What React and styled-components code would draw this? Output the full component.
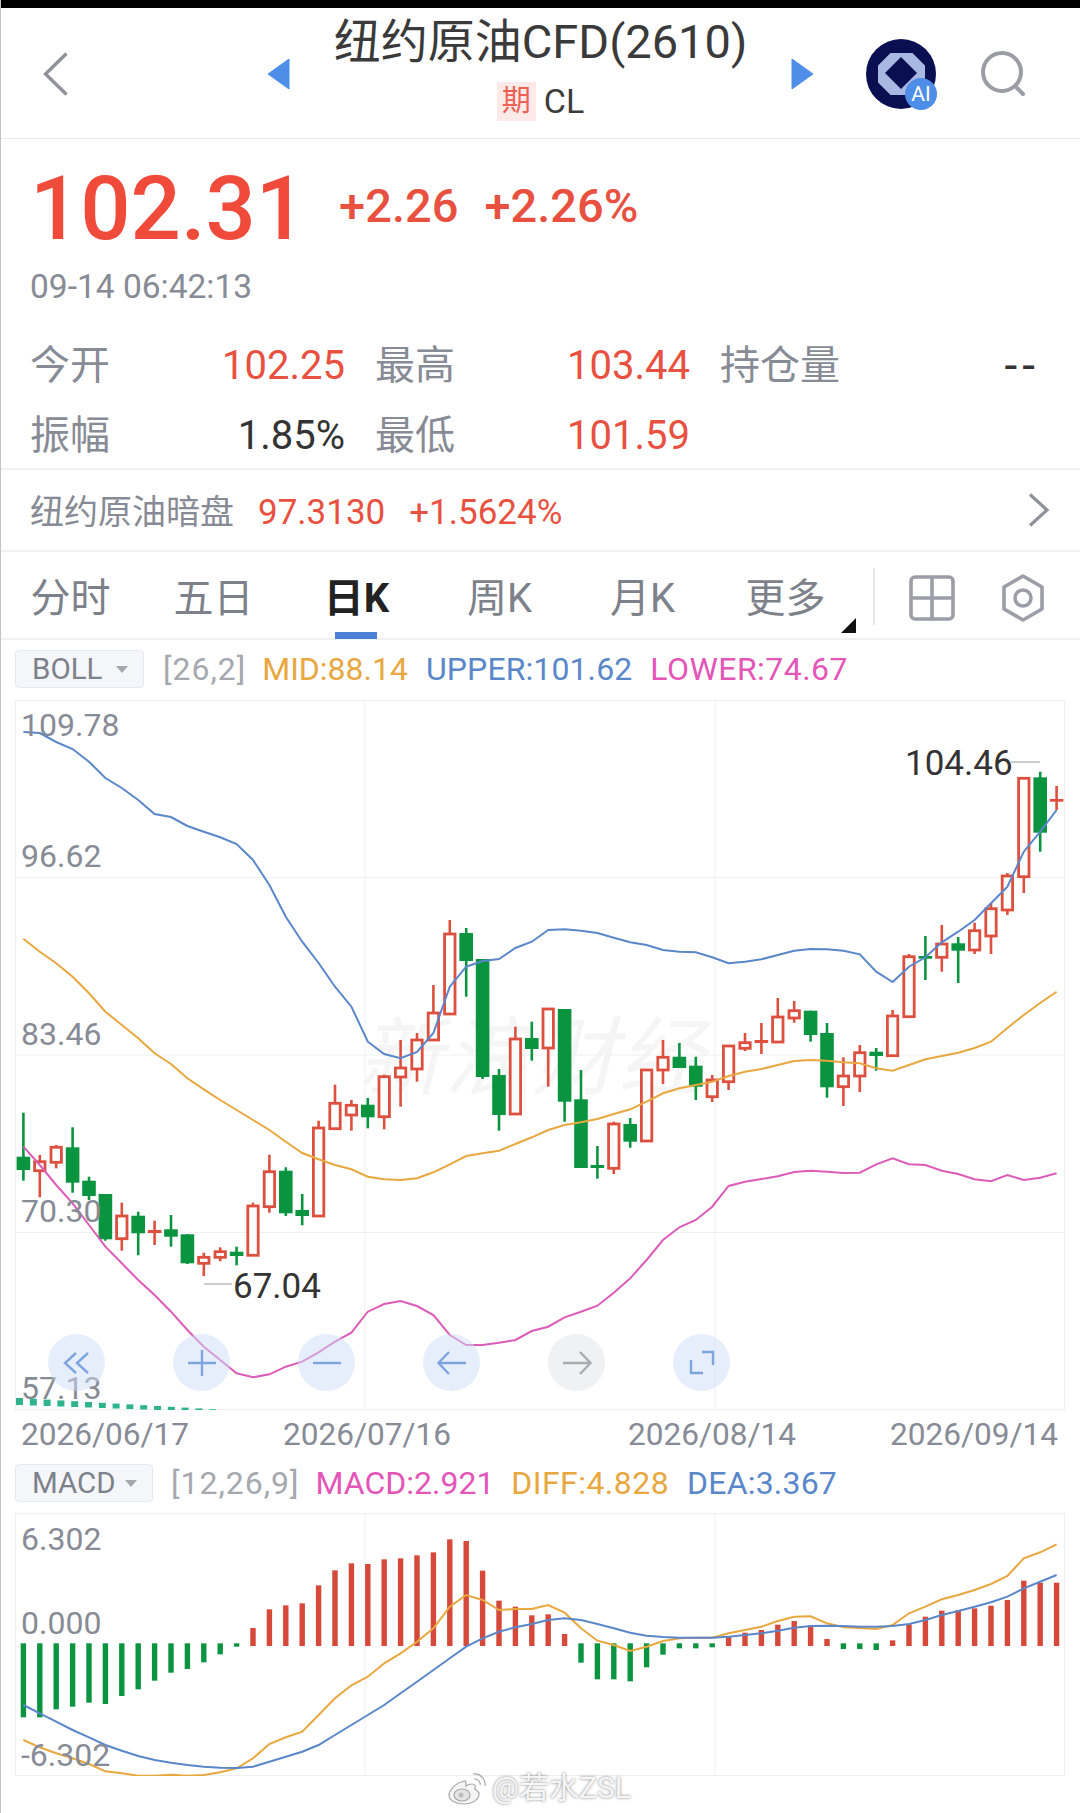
import * as React from "react";
import styled, { createGlobalStyle } from "styled-components";

const FONT = 'Roboto, "Noto Sans CJK SC", sans-serif';
const RED = "#e8503f";
const GREEN = "#0a9440";
const GREY = "#878b95";
const GOLD = "#e8a73f";
const BLUE = "#5a87c9";
const PINK = "#dc5cb8";

const GlobalStyle = createGlobalStyle`
  html, body {
    margin: 0;
    width: 1080px;
    height: 1813px;
    overflow: hidden;
    background: #fff;
    font-family: ${FONT};
  }
`;

const Page = styled.div`
  position: relative;
  width: 1080px;
  height: 1813px;
  box-sizing: border-box;
  border-left: 1px solid #c4c4c4;
  background: #fff;
  overflow: hidden;
`;

const StatusStrip = styled.div`
  height: 8px;
  margin-left: -1px;
  background: #000;
`;

/* header */
const Header = styled.header`
  display: flex;
  align-items: center;
  height: 131px;
  padding-top: 2px;
  box-sizing: border-box;
  border-bottom: 1px solid #e8e8e8;
`;

const BackSlot = styled.div`
  width: 266px;
  padding-left: 42px;
  box-sizing: border-box;
  display: flex;
`;

const TitleBlock = styled.div`
  align-self: flex-start;
  width: 499px;
  padding-top: 8px;
  box-sizing: border-box;
  display: flex;
  flex-direction: column;
  align-items: center;
`;

const Title = styled.div`
  height: 48px;
  line-height: 48px;
  font-size: 47px;
  color: #3a3a3a;
  white-space: nowrap;
`;

const SubTitle = styled.div`
  display: flex;
  align-items: center;
  gap: 8px;
  margin-top: 16px;
`;

const FutureBadge = styled.span`
  width: 39px;
  height: 39px;
  line-height: 39px;
  text-align: center;
  font-size: 29px;
  color: #ec6154;
  background: #fdeae8;
`;

const Symbol = styled.span`
  font-size: 34px;
  line-height: 39px;
  color: #3c3c3c;
`;

const HeaderActions = styled.div`
  display: flex;
  align-items: center;
  margin-left: 52px;
  gap: 45px;
`;

const AiBadge = styled.div`
  position: relative;
  width: 70px;
  height: 70px;
`;

const AiMark = styled.span`
  position: absolute;
  right: -1px;
  bottom: -1px;
  width: 32px;
  height: 32px;
  border-radius: 50%;
  background: #4f8ee8;
  color: #fff;
  font-size: 21px;
  line-height: 32px;
  text-align: center;
`;

/* quote */
const Quote = styled.section`
  height: 191px;
  padding-left: 29px;
  box-sizing: border-box;
`;

const PriceRow = styled.div`
  display: flex;
  align-items: center;
  height: 137px;
  padding-top: 3px;
  box-sizing: border-box;
`;

const LastPrice = styled.div`
  font-size: 88.5px;
  line-height: 90px;
  font-weight: 500;
  color: #f04a3a;
`;

const Change = styled.div`
  font-size: 47px;
  line-height: 48px;
  font-weight: 500;
  color: ${RED};
  margin-left: ${(p) => p.$gap}px;
  margin-bottom: 6px;
`;

const QuoteTime = styled.div`
  font-size: 33.5px;
  line-height: 22px;
  color: ${GREY};
`;

const Stats = styled.div`
  display: grid;
  grid-template-columns: 315px 315px 315px;
  column-gap: 30px;
  grid-auto-rows: 70px;
  padding-left: 29px;
  border-bottom: 2px solid #f0f0f0;
  height: 140px;
  box-sizing: border-box;
`;

const Stat = styled.div`
  display: flex;
  align-items: center;
  justify-content: space-between;
`;

const StatLabel = styled.span`
  font-size: 40px;
  line-height: 48px;
  color: ${GREY};
  margin-top: 2px;
`;

const StatValue = styled.span`
  font-size: 40px;
  line-height: 48px;
  margin-top: 2px;
  color: ${(p) => p.$color};
`;

const EmptyValue = styled.span`
  font-size: 46px;
  line-height: 48px;
  letter-spacing: 5px;
  margin-right: -5px;
  color: #333;
`;

const DarkPool = styled.div`
  display: flex;
  align-items: center;
  height: 82px;
  box-sizing: border-box;
  padding-left: 29px;
  border-bottom: 2px solid #f0f0f0;
`;

const DarkLabel = styled.span`
  font-size: 34px;
  line-height: 44px;
  color: ${GREY};
  margin: 3px 24px 0 0;
`;

const DarkValue = styled.span`
  font-size: 35px;
  color: ${RED};
  margin: 4px 24px 0 0;
`;

const RowChevron = styled.svg`
  margin-left: auto;
  margin-right: 30px;
`;

/* tabs */
const TabBar = styled.nav`
  display: flex;
  height: 88px;
  border-bottom: 2px solid #f0f0f0;
  box-sizing: border-box;
`;

const TabList = styled.div`
  display: flex;
  margin: 0 2px 0 -2px;
`;

const Tab = styled.div`
  position: relative;
  width: 143px;
  text-align: center;
  line-height: 93px;
  font-size: 40px;
  font-weight: ${(p) => (p.$active ? 700 : 400)};
  color: ${(p) => (p.$active ? "#222" : "#7d818a")};

  &::after {
    content: "";
    display: ${(p) => (p.$active ? "block" : "none")};
    position: absolute;
    left: 50%;
    bottom: -1px;
    width: 42px;
    height: 7px;
    margin-left: -22px;
    background: #4a80d8;
  }
`;

const MoreFlag = styled.span`
  position: absolute;
  right: 1px;
  bottom: 5px;
  width: 0;
  height: 0;
  border-left: 15px solid transparent;
  border-bottom: 15px solid #111;
`;

const TabDivider = styled.div`
  width: 2px;
  height: 57px;
  margin: 16px 0 0 14px;
  background: #e8e8ea;
`;

const TabIcons = styled.div`
  display: flex;
  align-items: center;
  gap: 47px;
  margin: 6px 0 0 34px;
`;

/* chart legends */
const Legend = styled.div`
  display: flex;
  align-items: flex-start;
  height: ${(p) => p.$height}px;
  padding: ${(p) => p.$top}px 0 0 14px;
  box-sizing: border-box;
  font-size: 32px;
  line-height: 38px;
`;

const IndicatorChip = styled.div`
  display: flex;
  align-items: center;
  justify-content: space-between;
  width: ${(p) => p.$width}px;
  height: 38px;
  padding: 0 15px 0 16px;
  box-sizing: border-box;
  border: 1px solid #e5e8ee;
  border-radius: 4px;
  background: #f4f6fa;
  color: #7d818a;
  font-size: 29.5px;

  &::after {
    content: "";
    border-left: 6px solid transparent;
    border-right: 6px solid transparent;
    border-top: 7px solid #a5a8ae;
  }
`;

const LegendItem = styled.span`
  color: ${(p) => p.$color};
  margin-left: ${(p) => p.$gap}px;
  letter-spacing: ${(p) => p.$spread || 0}px;
  white-space: nowrap;
`;

/* chart frames */
const ChartBox = styled.div`
  position: relative;
  width: 1050px;
  height: ${(p) => p.$height}px;
  margin-left: 14px;
`;

const ChartSvg = styled.svg`
  position: relative;
  display: block;
  z-index: 1;
`;

const Watermark = styled.span`
  position: absolute;
  left: 350px;
  top: 314px;
  font-size: 85px;
  line-height: 90px;
  letter-spacing: 2px;
  color: #f5f5f5;
  transform: skewX(-14deg);
  white-space: nowrap;
`;

const AxisLabel = styled.span`
  position: absolute;
  z-index: 2;
  left: ${(p) => p.$x}px;
  top: ${(p) => p.$y}px;
  font-size: 32px;
  line-height: 31px;
  color: ${GREY};
`;

const Extreme = styled.span`
  position: absolute;
  z-index: 2;
  left: ${(p) => p.$x}px;
  top: ${(p) => p.$y}px;
  font-size: 35px;
  line-height: 34px;
  color: #333;
`;

const ControlBar = styled.div`
  position: absolute;
  z-index: 3;
  left: 33px;
  top: 634px;
  display: flex;
  gap: 68px;
`;

const ControlButton = styled.div`
  width: 57px;
  height: 57px;
  border-radius: 50%;
  display: flex;
  align-items: center;
  justify-content: center;
  background: ${(p) => (p.$off ? "rgba(226, 228, 232, 0.5)" : "rgba(205, 222, 247, 0.5)")};
  color: ${(p) => (p.$off ? "#a8abb2" : "#7ea4e0")};
`;

const DateRow = styled.div`
  display: grid;
  grid-template-columns: 262px 345px 262px auto;
  height: 50px;
  padding: 11px 0 0 20px;
  box-sizing: border-box;
  font-size: 31.6px;
  line-height: 28px;
  color: ${GREY};
`;

const Credit = styled.div`
  position: absolute;
  z-index: 4;
  left: 447px;
  top: 1770px;
  display: flex;
  align-items: center;
  gap: 4px;
  font-size: 30px;
  line-height: 36px;
  color: #f5f5f5;
  text-shadow: 0 0 3px rgba(0, 0, 0, 0.5);
`;

// candle rows: up?, wick top, body top, body bottom, wick bottom (page px)
const CANDLES = [
  [0, 1112.7, 1156.7, 1170, 1180.7], [1, 1155, 1161.7, 1170.7, 1197.3], [1, 1145, 1147.3, 1162.3, 1168.3],
  [0, 1127.3, 1147.3, 1182.7, 1192.7], [0, 1176.7, 1180.7, 1196, 1200], [0, 1194, 1194, 1239.3, 1240.7],
  [1, 1202.7, 1216, 1238.7, 1250.7], [0, 1211.7, 1215.7, 1233.3, 1255.3], [1, 1220.7, 1230, 1233, 1245],
  [0, 1215, 1229.3, 1236.7, 1246.7], [0, 1234, 1234.3, 1263.3, 1264], [1, 1252.7, 1257.3, 1263.3, 1276],
  [1, 1247.3, 1251.7, 1257.3, 1261.3], [0, 1246.7, 1251.7, 1256, 1265.3], [1, 1202.7, 1206, 1255.3, 1256],
  [1, 1154.7, 1171.7, 1206.7, 1212.7], [0, 1167.3, 1170.7, 1213.3, 1216], [0, 1194, 1210, 1216, 1225.3],
  [1, 1120.7, 1128, 1216, 1216.7], [1, 1084.7, 1103.3, 1128.7, 1130], [1, 1100, 1105.3, 1115, 1130.7],
  [0, 1098, 1104.7, 1117.3, 1128.3], [1, 1074.7, 1076.7, 1116.7, 1129.3], [1, 1040, 1068, 1077, 1106.7],
  [1, 1033, 1040, 1069, 1081.7], [1, 985, 1013, 1040, 1040], [1, 920, 934, 1014, 1014],
  [0, 928, 933, 961, 996.7], [0, 959, 959, 1077, 1079], [0, 1069, 1075, 1115, 1130.7],
  [1, 1026.7, 1039, 1114, 1114], [0, 1021.7, 1038, 1049, 1060.7], [1, 1009, 1009, 1048, 1086.7],
  [0, 1009, 1009, 1101.7, 1121.7], [0, 1070, 1099.3, 1168, 1168], [0, 1146, 1165, 1168, 1178.7],
  [1, 1121.7, 1124, 1168.3, 1174], [0, 1118, 1124, 1141.7, 1147.7], [1, 1070, 1070, 1141, 1141],
  [1, 1040, 1057.3, 1070, 1084], [0, 1043, 1056.7, 1068, 1068], [0, 1056.7, 1065.7, 1086.7, 1100],
  [1, 1075, 1080, 1096.7, 1102], [1, 1046, 1046, 1081.7, 1090], [1, 1033, 1042.7, 1048.3, 1051],
  [1, 1023, 1040, 1043, 1054], [1, 998, 1017, 1042, 1043], [1, 1001, 1010.7, 1018, 1022.7],
  [0, 1010.7, 1010.7, 1035, 1041.7], [0, 1023, 1033, 1087.3, 1097.7], [1, 1057.3, 1076, 1086.7, 1106],
  [1, 1045, 1052.7, 1076, 1092], [0, 1048, 1051.7, 1056, 1070.7], [1, 1010, 1016, 1055.7, 1056],
  [1, 954, 956.7, 1016.7, 1017], [0, 936, 956, 958.7, 980], [1, 925, 944, 957.3, 971.7],
  [0, 937, 943.3, 950.7, 983], [1, 922.7, 930.7, 950, 954], [1, 903, 908.7, 936, 954],
  [1, 873, 876, 910, 915], [1, 778.3, 778.3, 876.7, 893], [0, 771.7, 777.3, 832.7, 851.7],
  [1, 786, 799, 801.7, 810],
];

const UPPER = [
  732, 733, 742, 749, 761.7, 778, 788, 800, 814, 817, 826, 831.7, 837.3, 844, 860, 885, 916.7, 941.7, 963, 986.7,
  1006.7, 1041.7, 1054, 1058.3, 1052, 1033, 986.7, 966.7, 961, 959, 948, 941.7, 930, 929.3, 930.7, 933, 937.7,
  942.3, 945, 950, 951.7, 952.3, 957.3, 963.3, 961.7, 959.3, 955, 950.7, 949, 949.3, 950.7, 954.3, 971.7, 982,
  966.7, 957.3, 942.3, 931.7, 920, 903.3, 886.7, 851.7, 831.7, 810,
];

const MID = [
  938.7, 951.7, 963.3, 976.7, 993.3, 1011.7, 1025, 1038.3, 1053.3, 1064, 1078.3, 1089.3, 1100, 1110, 1120, 1130,
  1141.7, 1153, 1159.3, 1165, 1169.3, 1176.7, 1179.3, 1180, 1178.3, 1172.3, 1164.3, 1156, 1153.3, 1150.7, 1144,
  1137.3, 1130, 1125, 1122.3, 1119, 1114, 1109.3, 1101.7, 1093.3, 1088.3, 1085, 1081.7, 1076, 1071.7, 1069, 1065,
  1061, 1060, 1060.7, 1062.3, 1063.3, 1068.3, 1070.7, 1065, 1059.3, 1056, 1052.7, 1048, 1041.7, 1028, 1015, 1003,
  991.7,
];

const LOWER = [
  1146.7, 1165, 1185, 1203.3, 1225, 1246.7, 1263.3, 1280, 1295, 1311.7, 1330, 1346.7, 1360, 1373.3, 1377.3,
  1374.3, 1366.7, 1361.7, 1352.3, 1341.7, 1332.7, 1311.7, 1304, 1301, 1306, 1315, 1335, 1345, 1345, 1342.7, 1340,
  1331, 1326.7, 1317.3, 1311.7, 1305.7, 1292.7, 1278.3, 1260, 1240, 1227.3, 1220, 1206.7, 1186, 1181.7, 1179,
  1176.3, 1172, 1170.7, 1171.7, 1173, 1172.7, 1164.3, 1158.3, 1164.3, 1165, 1170.7, 1174, 1179.3, 1181.3, 1175,
  1180, 1177.7, 1173.3,
];

// macd rows are read off a 3x crop that starts at y=1450
const HIST = [
  802, 802, 778, 770, 758, 762, 738, 718, 692, 668, 657, 637, 613, 590, 534, 478, 466, 460, 406, 361, 340, 342, 328,
  325, 316, 307, 268, 273, 362, 452, 470, 496, 493, 552, 638, 688, 688, 694, 652, 614, 595, 595, 592, 560, 548, 540,
  524, 513, 526, 567, 597, 597, 600, 571, 523, 500, 482, 480, 475, 467, 450, 392, 398, 398,
];

const DIFF = [
  870, 892, 910, 925, 942, 964, 970, 977, 977, 974, 977, 975, 967, 955, 925, 882, 862, 845, 795, 745, 706, 680, 640,
  610, 575, 535, 470, 435, 450, 480, 477, 477, 465, 488, 535, 572, 585, 603, 590, 573, 565, 563, 563, 550, 540, 530,
  513, 500, 499, 520, 532, 534, 537, 525, 490, 470, 448, 435, 420, 402, 378, 325, 307, 283,
];

const DEA = [
  765, 790, 815, 840, 862, 885, 902, 918, 930, 938, 945, 950, 953, 954, 950, 935, 920, 905, 885, 855, 825, 795, 765,
  730, 695, 660, 625, 590, 565, 545, 532, 522, 510, 505, 510, 522, 535, 548, 557, 561, 563, 563, 563, 560, 555, 550,
  542, 533, 528, 527, 528, 530, 530, 528, 522, 510, 495, 483, 470, 457, 440, 415, 395, 375,
];

const candleX = (i) => 23.4 + i * 16.4;
const macdY = (v) => 1450 + v / 3;
const toPoints = (values, mapY = (v) => v) =>
  values.map((v, i) => `${candleX(i).toFixed(1)},${mapY(v).toFixed(1)}`).join(" ");

function Candle({ index, up, wickTop, bodyTop, bodyBottom, wickBottom }) {
  const x = candleX(index);
  const color = up ? "#dd4f3e" : GREEN;
  const thin = bodyBottom - bodyTop < 5;
  return (
    <g>
      <line x1={x} x2={x} y1={wickTop} y2={wickBottom} stroke={color} strokeWidth="2.6" />
      {up && !thin ? (
        <rect x={x - 5.2} y={bodyTop} width="10.4" height={bodyBottom - bodyTop} fill="#fff" stroke={color} strokeWidth="2.8" />
      ) : (
        <rect x={x - 6.8} y={bodyTop} width="13.6" height={bodyBottom - bodyTop} fill={color} />
      )}
    </g>
  );
}

function GridLines({ top, height, rows }) {
  return (
    <g stroke="#eeeff1" strokeWidth="1" fill="none">
      <rect x="15.5" y={top + 0.5} width="1049" height={height - 1} />
      <line x1="365" x2="365" y1={top} y2={top + height} />
      <line x1="715" x2="715" y1={top} y2={top + height} />
      {rows.map((y) => (
        <line key={y} x1="15" x2="1065" y1={y} y2={y} />
      ))}
    </g>
  );
}

function KLineChart() {
  return (
    <ChartSvg width="1050" height="710" viewBox="15 700 1050 710">
      <GridLines top={700} height={710} rows={[877.5, 1055, 1232.5]} />
      {Array.from({ length: 15 }, (_, i) => (
        <rect key={i} x={16 + i * 13.8} y={1398 + i * 0.8} width="7" height={7 - i * 0.3} fill="#2fb38c" />
      ))}
      {CANDLES.map(([up, wickTop, bodyTop, bodyBottom, wickBottom], i) => (
        <Candle key={i} index={i} up={up === 1} wickTop={wickTop} bodyTop={bodyTop} bodyBottom={bodyBottom} wickBottom={wickBottom} />
      ))}
      <polyline points={toPoints(UPPER)} fill="none" stroke={BLUE} strokeWidth="2" />
      <polyline points={toPoints(MID)} fill="none" stroke={GOLD} strokeWidth="2" />
      <polyline points={toPoints(LOWER)} fill="none" stroke={PINK} strokeWidth="2" />
      <line x1="1011" x2="1040" y1="762" y2="762" stroke="#999" strokeWidth="1" />
      <line x1="204" x2="232" y1="1284" y2="1284" stroke="#999" strokeWidth="1" />
    </ChartSvg>
  );
}

function MacdChart() {
  return (
    <ChartSvg width="1050" height="263" viewBox="15 1513 1050 263">
      <GridLines top={1513} height={263} rows={[]} />
      {HIST.map((v, i) => {
        const y = macdY(v);
        const up = y < 1643.5;
        const top = up ? y : 1643.3;
        const bottom = up ? 1646 : y;
        return <rect key={i} x={candleX(i) - 2.7} y={top} width="5.4" height={bottom - top} fill={up ? "#d6493a" : GREEN} />;
      })}
      <polyline points={toPoints(DIFF, macdY)} fill="none" stroke={GOLD} strokeWidth="2" />
      <polyline points={toPoints(DEA, macdY)} fill="none" stroke={BLUE} strokeWidth="2" />
    </ChartSvg>
  );
}

const ControlGlyph = ({ children }) => (
  <svg width="32" height="32" viewBox="0 0 32 32" fill="none" stroke="currentColor" strokeWidth="2.4">
    {children}
  </svg>
);

const CONTROLS = [
  { key: "first", path: "M15 6 L4 16 L15 26 M27 6 L16 16 L27 26" },
  { key: "in", path: "M2 16 H30 M16 3 V29" },
  { key: "out", path: "M2 16 H30" },
  { key: "left", path: "M30 16 H3 M13 5 L2.5 16 L13 27" },
  { key: "right", path: "M2 16 H29 M19 5 L29.5 16 L19 27", off: true },
  { key: "fit", path: "M16 5 H27 V18 M5 13 V26 H17" },
];

function App() {
  return (
    <Page>
      <GlobalStyle />
      <StatusStrip />
      <Header>
        <BackSlot>
          <svg width="26" height="44" viewBox="0 0 26 44" fill="none" stroke="#8e9299" strokeWidth="3.4">
            <path d="M23.5 1.5 L2.5 22 L23.5 42.5" />
          </svg>
        </BackSlot>
        <svg width="24" height="30" viewBox="0 0 24 30">
          <path d="M22 0 V30 L1 15 Z" fill="#4f8ee8" stroke="#4f8ee8" strokeLinejoin="round" />
        </svg>
        <TitleBlock>
          <Title>纽约原油CFD(2610)</Title>
          <SubTitle>
            <FutureBadge>期</FutureBadge>
            <Symbol>CL</Symbol>
          </SubTitle>
        </TitleBlock>
        <svg width="24" height="30" viewBox="0 0 24 30">
          <path d="M2 0 V30 L23 15 Z" fill="#4f8ee8" stroke="#4f8ee8" strokeLinejoin="round" />
        </svg>
        <HeaderActions>
          <AiBadge>
            <svg width="70" height="70" viewBox="0 0 70 70">
              <circle cx="35" cy="35" r="35" fill="#0a0f52" />
              <path d="M25 15 H46 L58 27 V43 L46 55 H25 L13 43 V27 Z" fill="#a9b8e2" stroke="#a9b8e2" strokeWidth="2" strokeLinejoin="round" />
              <path d="M35 18 L51 34 L35 50 L19 34 Z" fill="#0a0f52" />
            </svg>
            <AiMark>AI</AiMark>
          </AiBadge>
          <svg width="46" height="46" viewBox="0 0 46 46" fill="none" stroke="#9a9da3" strokeWidth="4" strokeLinecap="round">
            <circle cx="21" cy="21" r="19" />
            <path d="M36 37 L42 43" />
          </svg>
        </HeaderActions>
      </Header>

      <Quote>
        <PriceRow>
          <LastPrice>102.31</LastPrice>
          <Change $gap={33}>+2.26</Change>
          <Change $gap={26}>+2.26%</Change>
        </PriceRow>
        <QuoteTime>09-14 06:42:13</QuoteTime>
      </Quote>

      <Stats>
        <Stat>
          <StatLabel>今开</StatLabel>
          <StatValue $color={RED}>102.25</StatValue>
        </Stat>
        <Stat>
          <StatLabel>最高</StatLabel>
          <StatValue $color={RED}>103.44</StatValue>
        </Stat>
        <Stat>
          <StatLabel>持仓量</StatLabel>
          <EmptyValue>--</EmptyValue>
        </Stat>
        <Stat>
          <StatLabel>振幅</StatLabel>
          <StatValue $color="#333">1.85%</StatValue>
        </Stat>
        <Stat>
          <StatLabel>最低</StatLabel>
          <StatValue $color={RED}>101.59</StatValue>
        </Stat>
      </Stats>

      <DarkPool>
        <DarkLabel>纽约原油暗盘</DarkLabel>
        <DarkValue>97.3130</DarkValue>
        <DarkValue>+1.5624%</DarkValue>
        <RowChevron width="22" height="34" viewBox="0 0 22 34" fill="none" stroke="#8e9299" strokeWidth="3.2">
          <path d="M2 1.5 L19 17 L2 32.5" />
        </RowChevron>
      </DarkPool>

      <TabBar>
        <TabList>
          <Tab>分时</Tab>
          <Tab>五日</Tab>
          <Tab $active>日K</Tab>
          <Tab>周K</Tab>
          <Tab>月K</Tab>
          <Tab>
            更多
            <MoreFlag />
          </Tab>
        </TabList>
        <TabDivider />
        <TabIcons>
          <svg width="46" height="46" viewBox="0 0 46 46" fill="none" stroke="#9b9ea8" strokeWidth="3.6">
            <rect x="2" y="2" width="42" height="42" rx="4" />
            <path d="M23 2 V44 M2 23 H44" />
          </svg>
          <svg width="42" height="48" viewBox="0 0 42 48" fill="none" stroke="#9b9ea8" strokeWidth="3.6">
            <path d="M21 2 L40 13 V35 L21 46 L2 35 V13 Z" strokeLinejoin="round" />
            <circle cx="21" cy="24" r="8" />
          </svg>
        </TabIcons>
      </TabBar>

      <Legend $height={60} $top={10}>
        <IndicatorChip $width={129}>BOLL</IndicatorChip>
        <LegendItem $color="#a5a8ae" $gap={19} $spread={1}>[26,2]</LegendItem>
        <LegendItem $color={GOLD} $gap={16}>MID:88.14</LegendItem>
        <LegendItem $color={BLUE} $gap={18} $spread={0.1}>UPPER:101.62</LegendItem>
        <LegendItem $color="#e356b8" $gap={18} $spread={0.45}>LOWER:74.67</LegendItem>
      </Legend>

      <ChartBox $height={710}>
        <Watermark>新浪财经</Watermark>
        <KLineChart />
        <AxisLabel $x={6} $y={10}>109.78</AxisLabel>
        <AxisLabel $x={6} $y={141}>96.62</AxisLabel>
        <AxisLabel $x={6} $y={319}>83.46</AxisLabel>
        <AxisLabel $x={6} $y={496}>70.30</AxisLabel>
        <AxisLabel $x={6} $y={673}>57.13</AxisLabel>
        <Extreme $x={890} $y={47}>104.46</Extreme>
        <Extreme $x={218} $y={570}>67.04</Extreme>
        <ControlBar>
          {CONTROLS.map((c) => (
            <ControlButton key={c.key} $off={c.off}>
              <ControlGlyph>
                <path d={c.path} />
              </ControlGlyph>
            </ControlButton>
          ))}
        </ControlBar>
      </ChartBox>

      <DateRow>
        <span>2026/06/17</span>
        <span>2026/07/16</span>
        <span>2026/08/14</span>
        <span>2026/09/14</span>
      </DateRow>

      <Legend $height={53} $top={4}>
        <IndicatorChip $width={138}>MACD</IndicatorChip>
        <LegendItem $color="#a5a8ae" $gap={18} $spread={1}>[12,26,9]</LegendItem>
        <LegendItem $color="#e356b8" $gap={16}>MACD:2.921</LegendItem>
        <LegendItem $color={GOLD} $gap={17} $spread={0.45}>DIFF:4.828</LegendItem>
        <LegendItem $color={BLUE} $gap={18} $spread={0.2}>DEA:3.367</LegendItem>
      </Legend>

      <ChartBox $height={263}>
        <MacdChart />
        <AxisLabel $x={6} $y={11}>6.302</AxisLabel>
        <AxisLabel $x={6} $y={95}>0.000</AxisLabel>
        <AxisLabel $x={6} $y={227}>-6.302</AxisLabel>
      </ChartBox>

      <Credit>
        <svg width="40" height="34" viewBox="0 0 40 34" fill="#f5f5f5" stroke="#a8a8a8" strokeWidth="1.2">
          <path d="M16 10 C8 12 1 19 1 24 C1 30 9 33 16 33 C25 33 31 28 31 23 C31 20 28 19 27 18 C28 15 27 13 24 13 C21 13 19 14 18 15 C18 12 18 9 16 10 Z" />
          <ellipse cx="14" cy="24" rx="8" ry="6" fill="#e4e4e4" />
          <circle cx="13" cy="24" r="2.5" fill="#bbb" stroke="none" />
          <path d="M25 3 C32 2 38 8 37 15 M26 8 C30 8 33 11 32 14" fill="none" />
        </svg>
        <span>@若水ZSL</span>
      </Credit>
    </Page>
  );
}

export default App;
